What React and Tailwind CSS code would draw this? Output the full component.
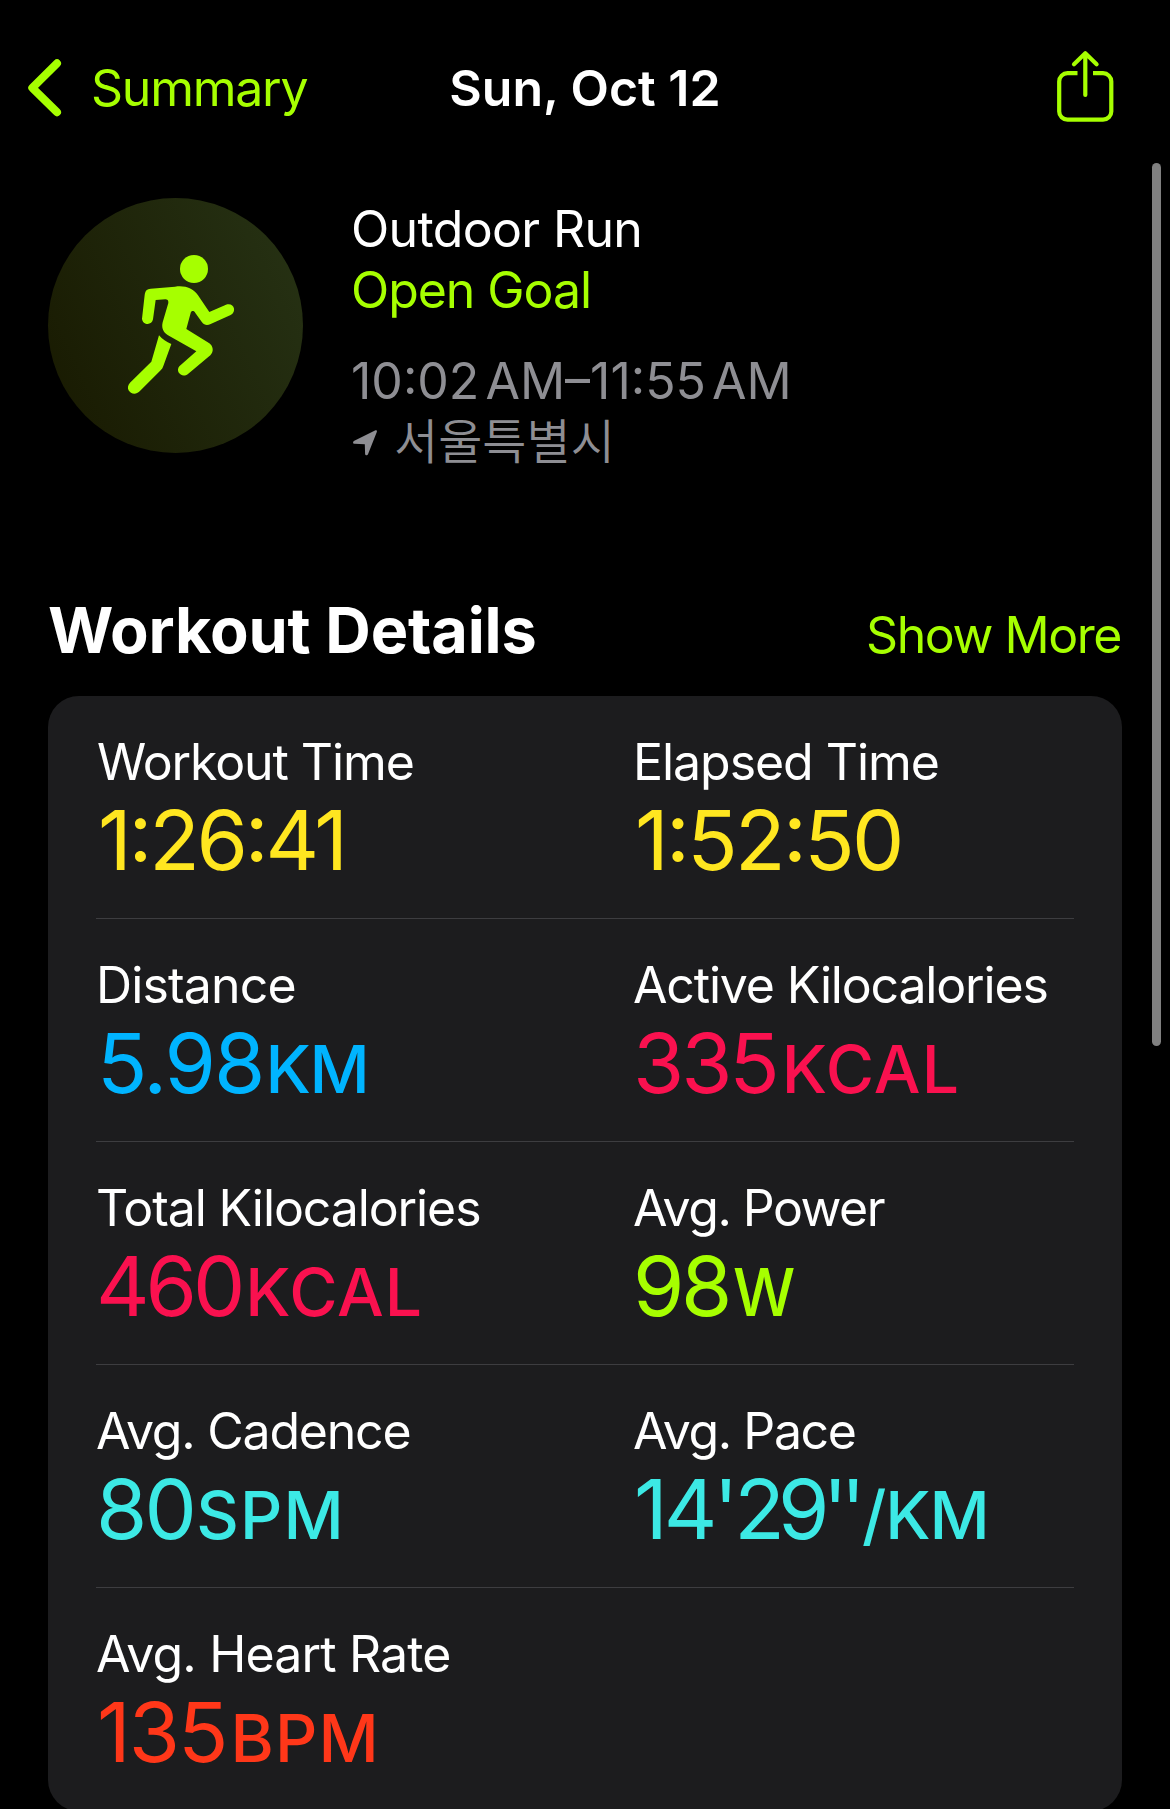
import React from 'react';

const metrics = [
  {
    label: 'Workout Time', labelClass: 'tracking-[-1.1px]',
    value: '1:26:41', valueClass: 'ml-px tracking-[-3.23px]',
    color: 'text-[#ffe620]',
  },
  {
    label: 'Elapsed Time', labelClass: '-ml-px tracking-[-1.05px]',
    value: '1:52:50', valueClass: 'ml-px tracking-[-2.69px]',
    color: 'text-[#ffe620]',
  },
  {
    label: 'Distance', labelClass: '-ml-px tracking-[-0.84px]',
    value: '5.98', valueClass: 'tracking-[-2px]',
    unit: 'KM', unitClass: 'ml-[2px] tracking-[-1.38px]',
    color: 'text-[#00b4ff]',
  },
  {
    label: 'Active Kilocalories', labelClass: '-ml-px tracking-[-1.17px]',
    value: '335', valueClass: '-ml-px tracking-[-3.12px]',
    unit: 'KCAL', unitClass: 'ml-[5px] tracking-[1.1px]',
    color: 'text-[#fa114f]',
  },
  {
    label: 'Total Kilocalories', labelClass: '-ml-px tracking-[-1.1px]',
    value: '460', valueClass: '-ml-px tracking-[-4.04px]',
    unit: 'KCAL', unitClass: 'ml-[4px] tracking-[0.9px]',
    color: 'text-[#fa114f]',
  },
  {
    label: 'Avg. Power', labelClass: '-ml-px tracking-[-1.5px]',
    value: '98', valueClass: '-ml-px tracking-[-3.47px]',
    unit: 'W', unitClass: 'ml-[4px] origin-left scale-x-[0.94]',
    color: 'text-[#a6ff00]',
  },
  {
    label: 'Avg. Cadence', labelClass: '-ml-px tracking-[-1.22px]',
    value: '80', valueClass: '-ml-px tracking-[-2.75px]',
    unit: 'SPM', unitClass: 'ml-[2px] tracking-[1.2px]',
    color: 'text-[#3ce9e5]',
  },
  {
    label: 'Avg. Pace', labelClass: '-ml-px tracking-[-1.4px]',
    value: (
      <>
        <span className="tracking-[-4px]">14'</span>
        <span className="tracking-[-6.8px]">29''</span>
      </>
    ),
    valueClass: '',
    unit: '/KM', unitClass: 'ml-[3px] tracking-[-1.09px]',
    color: 'text-[#3ce9e5]',
  },
  {
    label: 'Avg. Heart Rate', labelClass: '-ml-px tracking-[-0.84px]',
    value: '135', valueClass: 'tracking-[-2.01px]',
    unit: 'BPM', unitClass: 'ml-[4px] tracking-[1.2px]',
    color: 'text-[#ff3719]',
  },
];

// two metrics per row
const metricRows = [];
for (let i = 0; i < metrics.length; i += 2) {
  metricRows.push(metrics.slice(i, i + 2));
}

const ChevronIcon = () => (
  <svg className="w-[34px] h-[59px]" viewBox="0 0 34 59" fill="none" stroke="currentColor" strokeWidth="8" strokeLinecap="round" strokeLinejoin="round">
    <path d="M29 5.3 4.3 29.8 29 54.2" />
  </svg>
);

const ShareIcon = () => (
  <svg className="w-[57px] h-[72px]" viewBox="0 0 57 72" fill="none" stroke="currentColor" strokeWidth="4.2">
    <path d="M20.5 23.2H10.5a8.3 8.3 0 0 0-8.3 8.3V61.4a8.3 8.3 0 0 0 8.3 8.3H46a8.3 8.3 0 0 0 8.3-8.3V31.5a8.3 8.3 0 0 0-8.3-8.3H36" />
    <path d="M28.3 4V45M17 14.2 28.3 3.3 39.6 14.2" strokeLinecap="round" strokeLinejoin="round" />
  </svg>
);

const RunnerIcon = () => (
  <svg className="w-[255px] h-[255px]" viewBox="24 54 765 765" fill="currentColor">
    <circle cx="462" cy="267" r="42" />
    <path d="M332 326 405 320C436 316 458 324 474 346L508 396 558 374C581 366 592 394 572 405L512 432C502 437 493 436 486 427L466 399C462 391 454 391 452 399L439 447 508 490C520 499 522 515 511 526L444 582C426 596 405 575 418 559L469 514 384 466C369 457 364 443 368 427L385 369C386 361 382 358 376 358L347 360 339 418C336 437 308 436 306 416L314 345C316 331 321 327 332 326Z" />
    <path d="M357 466C367 478 379 486 394 492L370 558C368 564 366 567 362 571L299 634C280 653 251 629 270 608L334 545Z" />
  </svg>
);

const LocationIcon = () => (
  <svg className="w-[24px] h-[26px]" viewBox="0 0 24 26" fill="currentColor">
    <path d="M1.3 10.8 22 .4C23.5-.2 24.3.6 23.8 2L15 24.3C14.4 25.9 12.2 25.6 12.1 23.9L11.8 14.2 1.6 13.8C-.3 13.7-.5 11.7 1.3 10.8Z" />
  </svg>
);

const Metric = ({ metric }) => (
  <div className="pl-px whitespace-nowrap">
    <div className={`text-[50px] leading-[60px] text-white ${metric.labelClass}`}>{metric.label}</div>
    <div className={`flex items-baseline h-24 ${metric.color}`}>
      <span className={`text-[83px] leading-[96px] [font-feature-settings:'case'] ${metric.valueClass}`}>{metric.value}</span>
      {metric.unit && (
        <span className={`text-[66px] leading-none font-medium ${metric.unitClass}`}>{metric.unit}</span>
      )}
    </div>
  </div>
);

const App = () => {
  return (
    <div className="relative w-[1170px] h-[1809px] overflow-hidden bg-black text-white font-['Inter','Noto_Sans_CJK_KR',sans-serif]">
      {/* Nav bar */}
      <header className="grid grid-cols-[1fr_auto_1fr] items-start h-[198px] text-[50px] leading-[60px]">
        <button className="flex items-start pl-7 pt-[58px] text-[#a6ff00]">
          <ChevronIcon />
          <span className="ml-[29px] tracking-[-1.25px]">Summary</span>
        </button>
        <h1 className="pt-[58px] font-semibold">Sun, Oct 12</h1>
        <button className="justify-self-end pt-[50px] mr-[56px] text-[#a6ff00]">
          <ShareIcon />
        </button>
      </header>

      {/* Workout info */}
      <section className="flex h-[394px] px-12 text-[50px] leading-[61px] whitespace-nowrap">
        <div className="w-[255px] h-[255px] rounded-full bg-linear-[65deg] from-[#181900] to-[#273315] text-[#a6ff00]">
          <RunnerIcon />
        </div>
        <div className="ml-[48px] pt-px">
          <div className="tracking-[-0.65px]">Outdoor Run</div>
          <div className="tracking-[-1.05px] text-[#a6ff00]">Open Goal</div>
          <div className="mt-[30px] text-[#8e8e93]">
            10:02<span className="tracking-[-3px]">&#8239;</span>AM–11:55<span className="tracking-[-3px]">&#8239;</span>AM
          </div>
          <div className="flex items-center h-[61px] pl-[2px] text-[#8e8e93]">
            <LocationIcon />
            <span className="ml-[17px] mb-[8px] text-[48px] leading-[53px] font-[350] font-['Noto_Sans_CJK_KR',sans-serif]">서울특별시</span>
          </div>
        </div>
      </section>

      {/* Details */}
      <section className="px-12">
        <div className="flex items-baseline justify-between h-[104px]">
          <h2 className="text-[63px] leading-[76px] font-bold tracking-[-0.15px]">Workout Details</h2>
          <button className="mr-px text-[50px] leading-[60px] tracking-[-1.45px] text-[#a6ff00]">Show More</button>
        </div>
        <div className="rounded-[31px] bg-[#1c1c1e] pl-12 pr-12">
          {metricRows.map((row, index) => (
            <div
              key={index}
              className={`grid grid-cols-[537px_1fr] h-[223px] pt-9 ${index < metricRows.length - 1 ? 'border-b border-[#3d3d40]' : ''}`}
            >
              {row.map((metric) => (
                <Metric key={metric.label} metric={metric} />
              ))}
            </div>
          ))}
        </div>
      </section>

      {/* Scroll indicator */}
      <div className="absolute top-[163px] right-[9px] w-[9px] h-[883px] rounded-full bg-[#808080]" />
    </div>
  );
};

export default App;
